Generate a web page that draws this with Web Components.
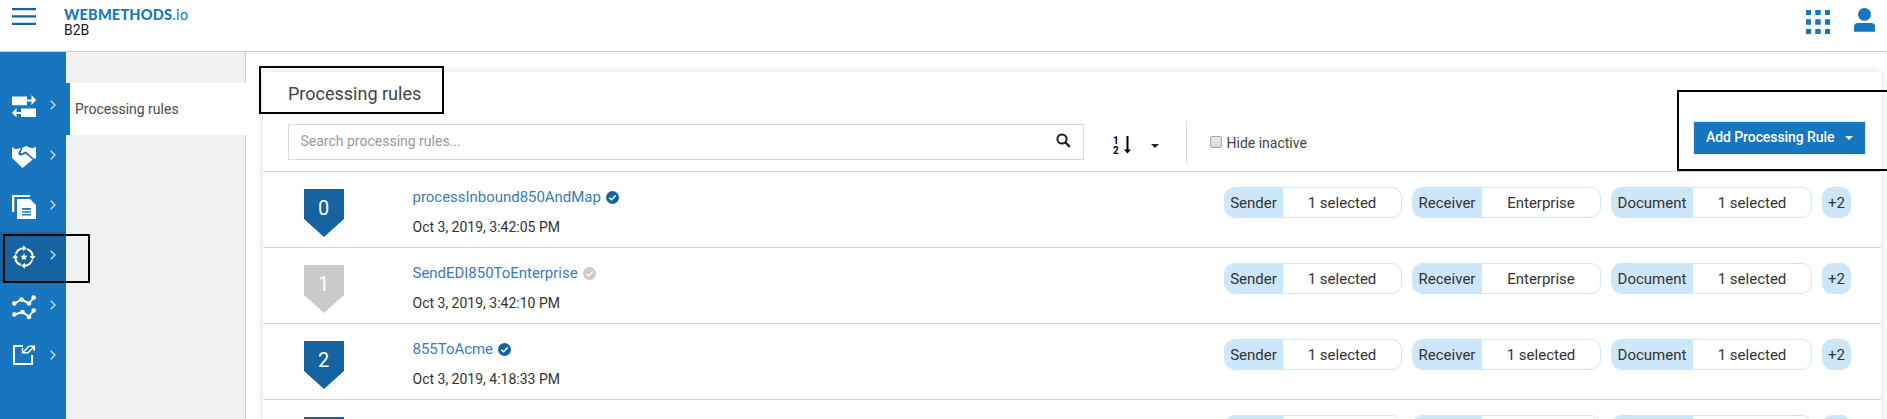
<!DOCTYPE html>
<html lang="en"><head><meta charset="utf-8"><title>webMethods.io B2B</title>
<style>
html,body{margin:0;height:419px;overflow:hidden;background:#fff}
body{font-family:Roboto,"Liberation Sans",sans-serif;font-size:14px;color:#333}
</style></head><body>
<b2b-app></b2b-app>
<script>
const define=(name,html)=>{
  const t=document.createElement('template');t.innerHTML=html;
  customElements.define(name,class extends HTMLElement{
    constructor(){super();this.attachShadow({mode:'open'}).append(t.content.cloneNode(true));}
  });
};
define('app-header',`<style>
:host{display:flex;box-sizing:border-box;height:52px;border-bottom:1px solid #ccc;background:#fff;padding-left:12px;align-items:flex-start}
.menu{width:24px;height:18px;margin-top:8px}
.brand{margin:6px 0 0 28px;color:#1776bf;font:900 14.500px/17px Lato,sans-serif;letter-spacing:.2px}
.brand span{font-weight:400;letter-spacing:.5px}
.brand div{font:400 14px/15px Roboto,sans-serif;color:#222;letter-spacing:0}
.right{margin:8px 12px 0 auto;display:flex;gap:24px}
svg{display:block}
</style>
<svg class="menu" viewBox="0 0 24 18" fill="#1563a0"><path d="M0 0h24v2.300H0zM0 7.200h24v2.300H0zM0 14.700h24v2.300H0z"/></svg>
<div class="brand">WEBMETHODS<span>.io</span><div>B2B</div></div>
<div class="right">
<svg width="24" height="26" viewBox="0 0 24 26" fill="#1776bf"><path d="M0 2h5v5H0zM9.3 2h5.400v5h-5.400zM19 2h5v5h-5zM0 11.300h5v5.400H0zM9.300 11.300h5.400v5.400h-5.400zM19 11.300h5v5.400h-5zM0 21h5v5H0zM9.300 21h5.400v5h-5.400zM19 21h5v5h-5z"/></svg>
<svg width="21" height="24" viewBox="0 0 21 24" fill="#1776bf"><circle cx="10.500" cy="6.400" r="6.400"/><path d="M0 23.800v-4.800a4 4 0 0 1 4-4h13a4 4 0 0 1 4 4v4.800z"/></svg>
</div>`);
define('nav-item',`<style>
:host{display:flex;height:50px;align-items:flex-start;padding-left:12px}
:host([active]){background:#1563a0}
.i{width:24px;height:26px;margin-top:12px}
svg{display:block}
.c{margin:18px 0 0 13.500px}
</style><div class="i"><slot></slot></div><svg class="c" width="6" height="10" viewBox="0 0 6 10" fill="none" stroke="#cfe4f5" stroke-width="1.300"><path d="M.7.7 5 5 .7 9.300"/></svg>`);
define('side-nav',`<style>
:host{display:block;width:66px;flex:none;background:#1776bf;padding-top:30px}
svg{display:block}
</style>
<nav-item><svg width="24" height="26" fill="#fff"><path d="M0 2.500h15v3h4.500V1L24 6l-4.500 5V7.500H15v3.700H0zM24 14.500V23H9v-3H4.500v3.500L0 19l4.500-5v4H9v-3.500z"/></svg></nav-item>
<nav-item><svg width="24" height="26" fill="#fff"><path d="M0 3 3.500 5.200 9 4 6.300 9.400 8.500 11.500 13.300 9.500 21 15.300 10.500 24 0 14z"/><path d="M10 4 14 2 20 4.300 24 3v11.500h-2.500L13.800 8l-4.500 1.500-1.200-1z"/><path d="M9.800 4.500 6.800 9.800l1.900 1.200 5-2.500 7.600 6.700" stroke="#1776bf" stroke-width="1.500" fill="none"/></svg></nav-item>
<nav-item><svg width="24" height="26" fill="#fff"><path d="M0 1h18v2H2.300v15H0z"/><path fill-rule="evenodd" d="M5 5h13l6 6v14H5zm5 9v1.700h9V14zm0 3.200v1.600h9v-1.600zm0 2.800v1.400h9V20z"/></svg></nav-item>
<nav-item active><svg width="24" height="26" fill="#fff"><g><path d="M3.900 10A8.700 8.700 0 0 1 11 4.300" fill="none" stroke="#fff" stroke-width="2.100"/><path d="M11 1.300 14.800 4.300 11 7.300z"/></g><g transform="rotate(90 12 13)"><path d="M3.900 10A8.700 8.700 0 0 1 11 4.300" fill="none" stroke="#fff" stroke-width="2.100"/><path d="M11 1.300 14.800 4.300 11 7.300z"/></g><g transform="rotate(180 12 13)"><path d="M3.900 10A8.700 8.700 0 0 1 11 4.300" fill="none" stroke="#fff" stroke-width="2.100"/><path d="M11 1.300 14.800 4.300 11 7.300z"/></g><g transform="rotate(270 12 13)"><path d="M3.900 10A8.700 8.700 0 0 1 11 4.300" fill="none" stroke="#fff" stroke-width="2.100"/><path d="M11 1.300 14.800 4.300 11 7.300z"/></g><path d="m12 9 .95 2.700 2.900.1-2.300 1.700.8 2.800-2.350-1.600-2.350 1.600.8-2.800-2.300-1.700 2.900-.1z"/></svg></nav-item>
<nav-item><svg width="24" height="26" fill="#fff" stroke="#fff" stroke-width="2"><path fill="none" d="m2.500 9.500 7-4 7.500 4 5-6.500M2.500 20.500l8-2.500 6.500 4.500 5-6.500"/><g stroke="none"><circle cx="2.300" cy="9.500" r="2.300"/><circle cx="9.500" cy="5.500" r="2.300"/><circle cx="17" cy="9.500" r="2.300"/><circle cx="21.700" cy="3.500" r="2.300"/><circle cx="2.300" cy="20.500" r="2.300"/><circle cx="10.500" cy="18" r="2.300"/><circle cx="17" cy="23" r="2.300"/><circle cx="21.700" cy="16.500" r="2.300"/></g></svg></nav-item>
<nav-item><svg width="24" height="26" fill="none" stroke="#fff"><path stroke-width="2" d="M11 2H2v18h18V11"/><path stroke-width="1.400" d="M10.800 8.400 17.200 2M15.500 9.200l6.700-6.700M10.500 4v4.800h4.800M17.700 2.200h4.600V7"/></svg></nav-item>`);
define('sub-nav',`<style>
:host{display:flex;flex-direction:column;width:180px;flex:none}
.g{box-sizing:border-box;background:#f1f1f1;border-right:1px solid #ccc}
.t{height:31px}.r{flex:1}
.a{box-sizing:border-box;height:52px;border-left:4px solid #1776bf;border-radius:0 2px 2px 0;padding-left:5px;background:#fff;line-height:52px;color:#4c4c4c}
</style><div class="g t"></div><div class="a">Processing rules</div><div class="g r"></div>`);
define('filter-chip',`<style>
:host{display:flex;box-sizing:border-box;height:31px;border:1px solid #cde6fa;border-radius:10px;overflow:hidden;font-size:15px;line-height:30px;color:#333;flex:none;text-align:center}
.l{background:#cde6fa;width:var(--lw);text-indent:-1px}
.v{flex:1}
</style><div class="l"><slot name="label"></slot></div><div class="v"><slot></slot></div>`);
define('rule-row',`<style>
:host{display:flex;box-sizing:border-box;height:76px;border-top:1px solid #d9dadb;padding-left:41px;--c:#1563a0}
:host([inactive]){--c:#cacaca}
.b{width:40px;height:48px;margin-top:17px;background:var(--c);clip-path:polygon(0 0,100% 0,100% 62.500%,50% 100%,0 62.500%);color:#fff;font-size:20px;line-height:39px;text-align:center;text-indent:-1px;flex:none}
.m{margin:14px 0 0 68.500px;flex:1}
.n{display:flex;align-items:center;font-size:15px;line-height:22px;color:#3c7cb8;gap:5px;letter-spacing:-.03px}
.d{line-height:20px;margin-top:9px;color:#333}
.f{display:flex;gap:10px;margin:15px 30px 0 0}
.p{box-sizing:border-box;width:29px;height:31px;background:#cde6fa;border-radius:10px;text-align:center;font-size:15px;line-height:32px}
:host([collapsed]) .n,:host([collapsed]) slot,:host([collapsed]) span{display:none}
</style><div class="b"><slot name="index"></slot></div>
<div class="m"><div class="n"><slot name="name"></slot><svg width="13" height="13" viewBox="0 0 13 13"><circle cx="6.500" cy="6.500" r="6.500" fill="var(--c)"/><path d="m3.300 6.700 2.200 2.100 4.200-4.300" fill="none" stroke="#fff" stroke-width="1.500"/></svg></div><div class="d"><slot name="date"></slot></div></div>
<div class="f">
<filter-chip style="width:178px;--lw:58px"><span slot="label">Sender</span><slot name="sender">1 selected</slot></filter-chip>
<filter-chip style="width:189px;--lw:69px"><span slot="label">Receiver</span><slot name="receiver">Enterprise</slot></filter-chip>
<filter-chip style="width:201px;--lw:81px"><span slot="label">Document</span><slot name="document">1 selected</slot></filter-chip>
<div class="p"><span>+2</span></div></div>`);
define('rules-toolbar',`<style>
:host{display:flex;height:99px;box-sizing:border-box;padding-left:25px;flex-direction:column}
h1{margin:10px 0 0;font-size:18px;line-height:24px;font-weight:400;color:#444}
.bar{display:flex;align-items:flex-start}
.s{box-sizing:border-box;width:796px;height:36px;margin-top:18px;border:1px solid #d9dadb;padding:0 12px 0 11.500px;display:flex;justify-content:space-between;line-height:33px;color:#999}
.s svg{margin-top:8px}
.sort{margin:30px 0 0 29px;display:flex;width:73px}
.nums{font:700 10px/10px Roboto,sans-serif;color:#000;width:11px}
.car{margin:8px 0 0 20px}
.div{width:1px;height:42px;background:#d9dadb;margin-top:15px}
.box{box-sizing:border-box;width:12px;height:12px;border:1px solid #aaa;border-radius:2px;background:linear-gradient(#e8e8e8,#ddd);margin:30px 0 0 23px}
.h{margin:26px 0 0 4.500px;line-height:22px;color:#444}
.btn{display:flex;box-sizing:border-box;width:173px;height:34px;border:1px solid #e5edf4;background:#1776bf;background-clip:padding-box;margin:15px 15px 0 auto;padding-left:12px;color:#fff;font-weight:500;line-height:31px;letter-spacing:-.08px}
.btn svg{margin:14px 0 0 11px}
</style><h1>Processing rules</h1><div class="bar">
<div class="s"><span>Search processing rules...</span><svg width="15" height="15" fill="none" stroke="#222"><circle cx="6" cy="6" r="4.600" stroke-width="2"/><path d="m9.500 9.500 4.300 4.300" stroke-width="2.400"/></svg></div>
<div class="sort"><div class="nums">1<br>2</div><svg width="7" height="18"><path d="M2.500 0h2v13.500H7L3.500 17.500 0 13.500h2.500z"/></svg><svg class="car" width="8" height="4"><path d="M0 0h8L4 4z" fill="#222"/></svg></div>
<div class="div"></div><div class="box"></div><div class="h">Hide inactive</div>
<div class="btn">Add Processing Rule<svg width="8" height="4"><path d="M0 0h8L4 4z" fill="#fff"/></svg></div></div>`);
define('callout-box',`<style>:host{display:block;position:absolute;box-sizing:border-box;border:2px solid #000;z-index:2}</style>`);
define('b2b-app',`<style>
:host{display:flex;flex-direction:column;position:relative;height:419px;overflow:hidden}
.body{display:flex;flex:1;min-height:0}
main{flex:1;margin:20px 6px 0 17px;box-shadow:0 0 9px rgba(0,0,0,.14);background:#fff;height:420px}
section{flex:1;overflow:hidden;display:flex}
</style><app-header></app-header>
<div class="body"><side-nav></side-nav><sub-nav></sub-nav><section><main><rules-toolbar></rules-toolbar>
<rule-row><span slot="index">0</span><span slot="name">processInbound850AndMap</span><span slot="date">Oct 3, 2019, 3:42:05 PM</span></rule-row>
<rule-row inactive><span slot="index">1</span><span slot="name">SendEDI850ToEnterprise</span><span slot="date">Oct 3, 2019, 3:42:10 PM</span></rule-row>
<rule-row><span slot="index">2</span><span slot="name">855ToAcme</span><span slot="date">Oct 3, 2019, 4:18:33 PM</span><span slot="receiver">1 selected</span></rule-row>
<rule-row collapsed></rule-row>
</main></section></div>
<callout-box style="left:259px;top:66px;width:185px;height:48px"></callout-box>
<callout-box style="left:1677px;top:90px;width:220px;height:81px"></callout-box>
<callout-box style="left:3px;top:234px;width:87px;height:49px"></callout-box>`);
</script></body></html>
